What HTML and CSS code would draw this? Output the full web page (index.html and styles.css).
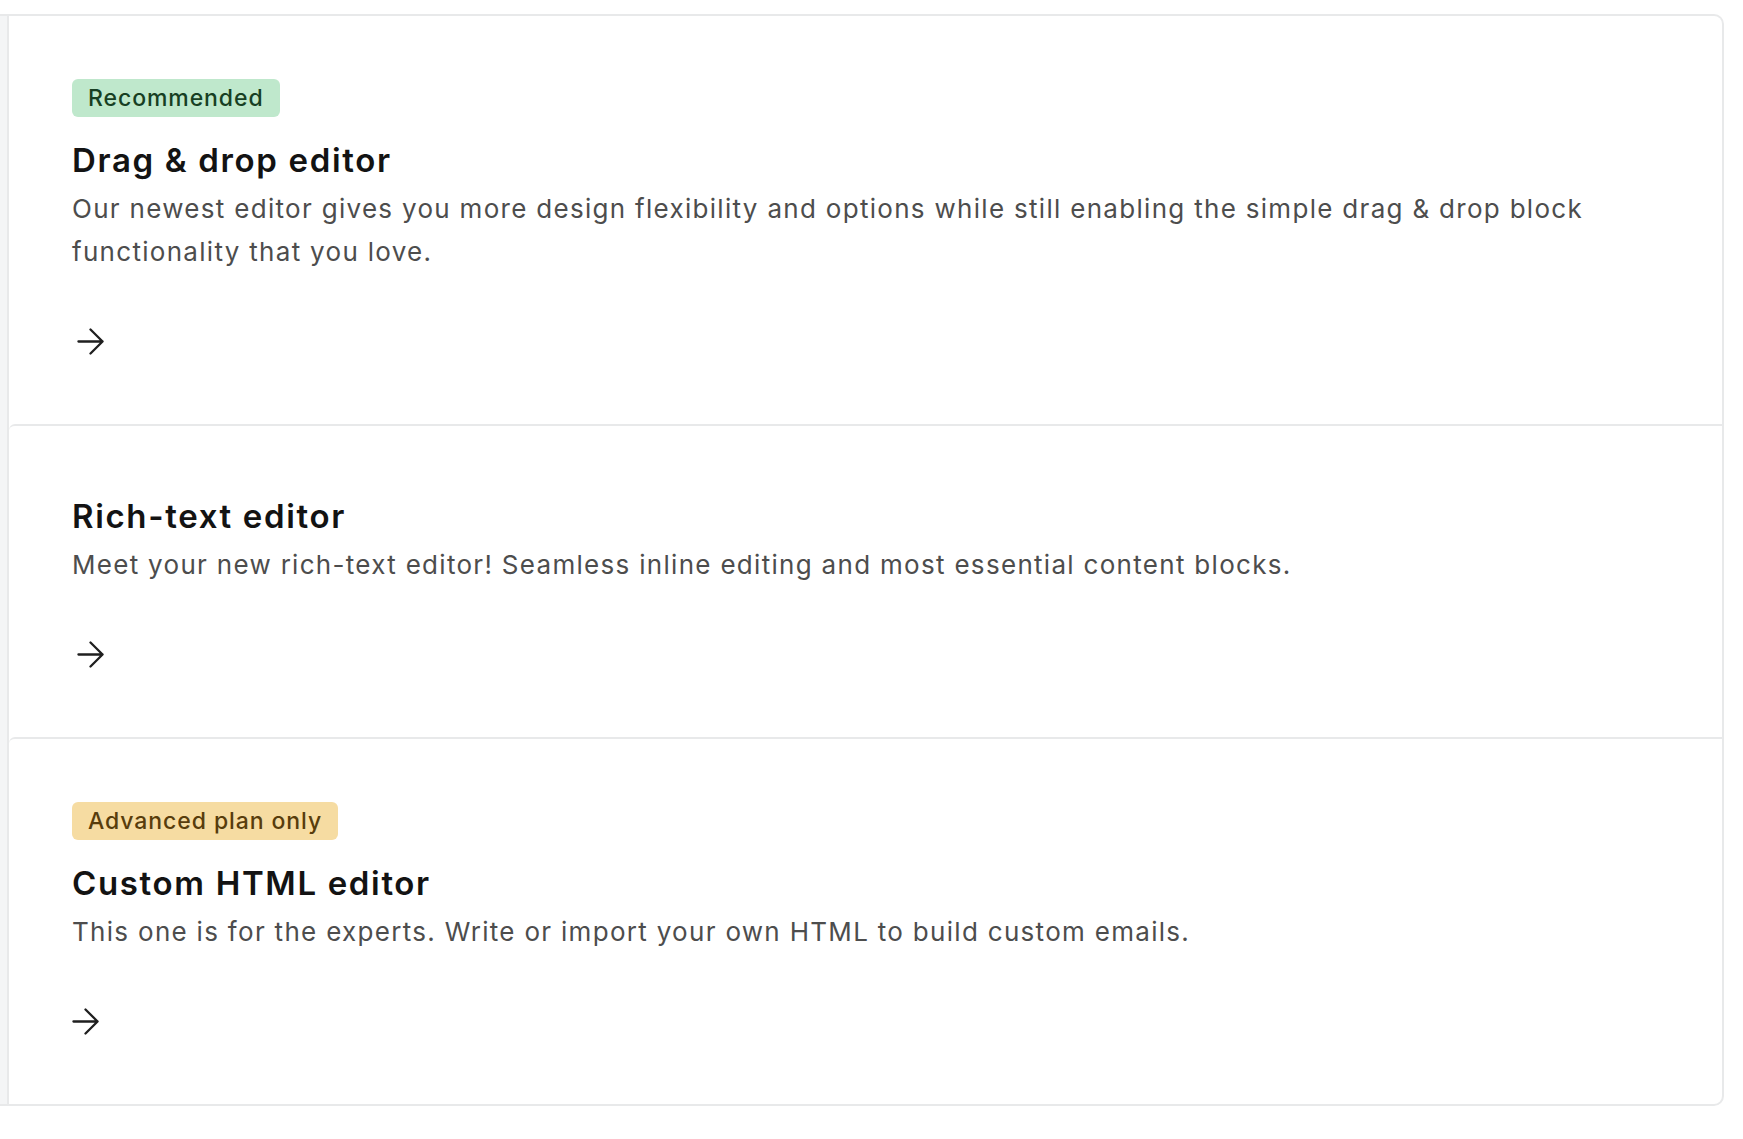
FILE: index.html
```html
<!DOCTYPE html>
<html lang="en">
<head>
<meta charset="utf-8">
<title>Choose an editor</title>
<link rel="stylesheet" href="styles.css">
</head>
<body>
<div class="frame">
  <div class="strip"></div>
  <div class="list">
    <div class="card">
      <span class="badge badge-green">Recommended</span>
      <h2 class="title">Drag &amp; drop editor</h2>
      <p class="desc">Our newest editor gives you more design flexibility and options while still enabling the simple drag &amp; drop block functionality that you love.</p>
      <div class="go go-shift">
        <svg width="28" height="28" viewBox="0 0 28 28" fill="none" stroke="#1f1f1f" stroke-width="2.4" stroke-linecap="round" stroke-linejoin="round"><path d="M1.5 14H26.5M14 1.5L26.5 14L14 26.5"/></svg>
      </div>
    </div>
    <div class="card">
      <h2 class="title">Rich-text editor</h2>
      <p class="desc">Meet your new rich-text editor! Seamless inline editing and most essential content blocks.</p>
      <div class="go go-shift">
        <svg width="28" height="28" viewBox="0 0 28 28" fill="none" stroke="#1f1f1f" stroke-width="2.4" stroke-linecap="round" stroke-linejoin="round"><path d="M1.5 14H26.5M14 1.5L26.5 14L14 26.5"/></svg>
      </div>
    </div>
    <div class="card">
      <span class="badge badge-amber">Advanced plan only</span>
      <h2 class="title">Custom HTML editor</h2>
      <p class="desc">This one is for the experts. Write or import your own HTML to build custom emails.</p>
      <div class="go">
        <svg width="28" height="28" viewBox="0 0 28 28" fill="none" stroke="#1f1f1f" stroke-width="2.4" stroke-linecap="round" stroke-linejoin="round"><path d="M1.5 14H26.5M14 1.5L26.5 14L14 26.5"/></svg>
      </div>
    </div>
  </div>
</div>
</body>
</html>
```
FILE: styles.css
```css
html, body {
  margin: 0;
  padding: 0;
  background: #ffffff;
}
body {
  padding: 14px 19px 0 0;
  font-family: Inter, "Noto Sans", "Liberation Sans", sans-serif;
  color: #1b1b1b;
}
.frame {
  display: flex;
  border: 2px solid #e8e9ea;
  border-left: none;
  border-radius: 0 10px 10px 0;
  overflow: hidden;
}
.strip {
  width: 7px;
  flex: none;
  background: #f4f5f6;
}
.list {
  flex: 1;
  border-left: 2px solid #e8e9ea;
  display: flex;
  flex-direction: column;
}
.card {
  display: flex;
  flex-direction: column;
  align-items: flex-start;
  padding: 63px 60px 69px 63px;
}
.card + .card {
  border-top: 2px solid #e8e9ea;
  border-top-left-radius: 6px;
}
.badge {
  display: inline-block;
  height: 38px;
  line-height: 38px;
  padding: 0 16px;
  border-radius: 6px;
  font-size: 23px;
  font-weight: 500;
  letter-spacing: 0.04em;
  margin-bottom: 16px;
  white-space: nowrap;
}
.badge-green {
  background: #bfe8cc;
  color: #173f23;
}
.badge-amber {
  background: #f6dca2;
  color: #583d0c;
}
.title {
  margin: 0;
  font-size: 33px;
  line-height: 54px;
  font-weight: 600;
  letter-spacing: 0.05em;
  color: #131313;
}
.desc {
  margin: 0;
  font-size: 26px;
  line-height: 43px;
  font-weight: 400;
  letter-spacing: 0.05em;
  color: #4d4d4d;
}
.go {
  margin-top: 55px;
  height: 27px;
  display: flex;
  align-items: center;
}
.go svg {
  display: block;
  width: 27px;
  height: 27px;
}
.go-shift {
  margin-left: 5px;
}
```
